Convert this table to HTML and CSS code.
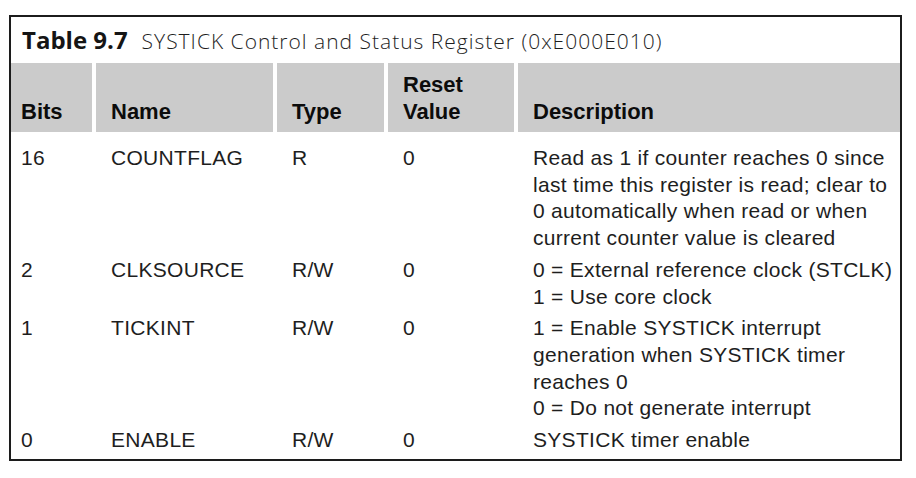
FILE: index.html
```html
<!DOCTYPE html>
<html>
<head>
<meta charset="utf-8">
<link rel="stylesheet" href="styles.css">
</head>
<body>
<div class="box">
  <div class="caption"><span class="cap-num">Table 9.7</span><span class="cap-title">SYSTICK Control and Status Register (0xE000E010)</span></div>
  <table class="reg">
    <colgroup>
      <col class="c-bits"><col class="c-name"><col class="c-type"><col class="c-reset"><col class="c-desc">
    </colgroup>
    <thead>
      <tr>
        <th>Bits</th><th>Name</th><th>Type</th><th>Reset<br>Value</th><th>Description</th>
      </tr>
    </thead>
    <tbody>
      <tr>
        <td>16</td><td>COUNTFLAG</td><td>R</td><td>0</td>
        <td>Read as 1 if counter reaches 0 since last time this register is read; clear to 0 automatically when read or when current counter value is cleared</td>
      </tr>
      <tr>
        <td>2</td><td>CLKSOURCE</td><td>R/W</td><td>0</td>
        <td>0 = External reference clock (STCLK)<br>1 = Use core clock</td>
      </tr>
      <tr>
        <td>1</td><td>TICKINT</td><td>R/W</td><td>0</td>
        <td>1 = Enable SYSTICK interrupt generation when SYSTICK timer reaches 0<br>0 = Do not generate interrupt</td>
      </tr>
      <tr>
        <td>0</td><td>ENABLE</td><td>R/W</td><td>0</td>
        <td>SYSTICK timer enable</td>
      </tr>
    </tbody>
  </table>
</div>
</body>
</html>
```

FILE: styles.css
```css
html, body {
  margin: 0;
  padding: 0;
  background: #ffffff;
}

body {
  padding: 15px 0 0 9px;
}

.box {
  width: 889px;
  border: 2px solid #1c1c1c;
  color: #151515;
}

.caption {
  height: 46px;
  box-sizing: border-box;
  padding: 10px 0 0 11px;
  font-family: "Open Sans", "Liberation Sans", sans-serif;
  line-height: 26px;
  white-space: nowrap;
}

.cap-num {
  font-weight: 700;
  font-size: 24px;
  margin-right: 14px;
}

.cap-title {
  font-weight: 300;
  font-size: 21px;
  letter-spacing: 1px;
  color: #1e1e1e;
}

.reg {
  width: 889px;
  table-layout: fixed;
  border-collapse: separate;
  border-spacing: 0;
  font-family: "Liberation Sans", Arial, sans-serif;
}

.c-bits { width: 81px; }
.c-name { width: 181px; }
.c-type { width: 111px; }
.c-reset { width: 130px; }
.c-desc { width: 386px; }

.reg th,
.reg td {
  border-left: 4px solid #ffffff;
  padding: 2.5px 4px 2.5px 15px;
  text-align: left;
  vertical-align: top;
}

.reg th:first-child,
.reg td:first-child {
  border-left: 0;
  padding-left: 10px;
}

.reg th {
  background: #cbcbcb;
  height: 69px;
  box-sizing: border-box;
  padding-top: 8px;
  padding-bottom: 7px;
  vertical-align: bottom;
  font-size: 22px;
  line-height: 27px;
  font-weight: 700;
  color: #0c0c0c;
}

.reg td {
  font-size: 21px;
  line-height: 26.7px;
  letter-spacing: 0.3px;
  color: #1e1e1e;
}

.reg tbody tr:first-child td {
  padding-top: 13px;
}

.reg tbody tr:last-child td {
  padding-bottom: 5px;
}
```
